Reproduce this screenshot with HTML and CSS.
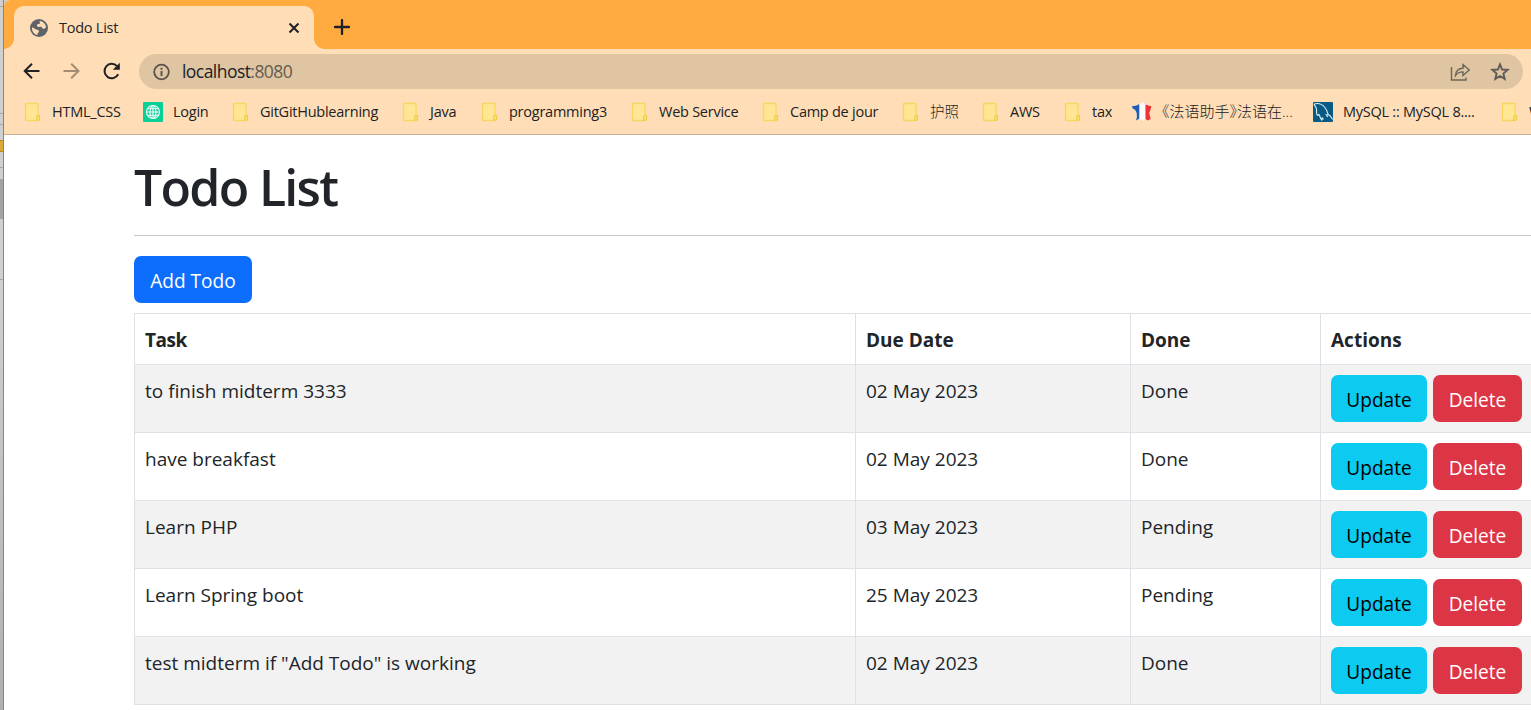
FILE: index.html
```html
<!DOCTYPE html>
<html lang="en">
<head>
<meta charset="utf-8">
<title>Todo List</title>
<link rel="stylesheet" href="styles.css">
</head>
<body>
<svg class="defs" width="0" height="0" aria-hidden="true">
  <symbol id="folder" viewBox="0 0 20 20">
    <path d="M3.500 1.500h12.500v11.500l1.500 1v3q0 1.500-1.500 1.500H3.500z" fill="#ffe694" stroke="#f7d75f" stroke-width="1.300" stroke-linejoin="round"/>
    <path d="M14.800 18.300v-3.500q0-1.500 1.300-1.500t1.300 1.500v2.300q0 1.200-1.300 1.200z" fill="#ffe47f" stroke="#f0c93e" stroke-width="1.100"/>
  </symbol>
</svg>
<div class="screen">
  <div class="behind"><i class="line l1"></i><i class="line l2"></i><i class="line l3"></i><i class="gold"></i><i class="line l4"></i><i class="thumb"></i><i class="line l5"></i></div>
  <div class="window">
    <div class="tabs">
      <div class="tab">
        <svg class="globe" viewBox="0 0 18 18"><circle cx="9" cy="9" r="9" fill="#5f6368"/><path d="M2 8.300l4.300 2.300c1 .6 2.600.3 2.700 1.600.1 1.200-1.300 1.100-1.500 2.400l-.2 1.500C4 15.500 1.600 12 2 8.300zM9.500 1.900c3.500.2 6.300 3 6.600 6.400-.9 1-1.700 1.700-2.900 1.500-1.300-.2-.8-1.700-2-2-1.300-.2-3.200.6-4-.5-.7-1 .1-2 1.200-2.200 1.100-.1 1.500-.3 1.500-1.400z" fill="#ffdeb7"/></svg>
        <span class="tab-title">Todo List</span>
        <svg class="close" viewBox="0 0 12 12"><path d="M1.500 1.500l9 9M10.500 1.500l-9 9" stroke="#202124" stroke-width="2" fill="none"/></svg>
      </div>
      <svg class="plus" viewBox="0 0 16 16"><path d="M8 1v14M1 8h14" stroke="#202124" stroke-width="2.300" stroke-linecap="round"/></svg>
    </div>
    <div class="toolbar">
      <svg class="nav" viewBox="0 0 20 20"><path d="M18.500 10H4M11 2.700L3.700 10l7.300 7.300" stroke="#202124" stroke-width="2" fill="none"/></svg>
      <svg class="nav" viewBox="0 0 20 20"><path d="M2.500 10h15M10.200 2.700L17.500 10l-7.300 7.300" stroke="#a28d74" stroke-width="2" fill="none"/></svg>
      <svg class="nav" viewBox="0 0 20 20"><path d="M17.200 13.200A7.200 7.200 0 1 1 16 5.100" stroke="#202124" stroke-width="2" fill="none"/><path d="M18.800 1.800v7h-7z" fill="#202124"/></svg>
      <div class="address">
        <svg class="info" viewBox="0 0 18 18"><circle cx="9.500" cy="9" r="7.300" fill="none" stroke="#5a534c" stroke-width="1.800"/><path d="M9.500 8v5M9.500 4.800v1.900" stroke="#5a534c" stroke-width="1.900"/></svg>
        <span class="url">localhost<span class="port">:8080</span></span>
        <svg class="share" viewBox="0 0 20 20"><path d="M1.500 5v13H16v-2.500M5.500 13.500C5.800 9 8.500 6.500 13 6.300V2.500L19.200 8 13 13.500V9.900C9.500 9.900 7.300 10.900 5.500 13.500z" fill="none" stroke="#6b645d" stroke-width="1.400"/></svg>
        <svg class="star" viewBox="0 0 20 20"><path d="M10 2.400l2.100 5.100 5.500.4-4.200 3.600 1.300 5.400-4.700-2.900-4.700 2.900 1.300-5.400L2.400 7.900l5.500-.4z" fill="none" stroke="#5f5b58" stroke-width="1.900"/></svg>
      </div>
    </div>
    <div class="bookmarks">
      <div class="bm b1"><svg viewBox="0 0 20 20"><use href="#folder"/></svg><span>HTML_CSS</span></div>
      <div class="bm b2"><svg viewBox="0 0 20 20"><rect width="20" height="20" rx="1" fill="#0acf97"/><g fill="none" stroke="#f4fffb" stroke-width="1.100"><circle cx="10" cy="10" r="6.500"/><ellipse cx="10" cy="10" rx="3" ry="6.500"/><path d="M10 3.500v13M3.500 10h13M4.500 6.800h11M4.500 13.200h11"/></g></svg><span>Login</span></div>
      <div class="bm b3"><svg viewBox="0 0 20 20"><use href="#folder"/></svg><span>GitGitHublearning</span></div>
      <div class="bm b4"><svg viewBox="0 0 20 20"><use href="#folder"/></svg><span>Java</span></div>
      <div class="bm b5"><svg viewBox="0 0 20 20"><use href="#folder"/></svg><span>programming3</span></div>
      <div class="bm b6"><svg viewBox="0 0 20 20"><use href="#folder"/></svg><span>Web Service</span></div>
      <div class="bm b7"><svg viewBox="0 0 20 20"><use href="#folder"/></svg><span>Camp de jour</span></div>
      <div class="bm b8"><svg viewBox="0 0 20 20"><use href="#folder"/></svg><span class="zh">护照</span></div>
      <div class="bm b9"><svg viewBox="0 0 20 20"><use href="#folder"/></svg><span>AWS</span></div>
      <div class="bm b10"><svg viewBox="0 0 20 20"><use href="#folder"/></svg><span>tax</span></div>
      <div class="bm b11"><svg viewBox="0 0 20 20"><path d="M0 4.200l4-.4L7.500 2v14.500L4 18.500q1.500-4 .7-7.500Q3.500 7 .5 6.500z" fill="#1d5fb8"/><path d="M7.500 2L9 1.600 10.500 0l1.500 1.600 1.500.4v14.500l-2 2-4-1.500z" fill="#fbfbfd"/><path d="M13.500 2.500l6 2-1.500 4.500-.8 2 1.500 6-3 1.500-2.200-1.500z" fill="#ee3338"/></svg><span class="zh long">《法语助手》法语在...</span></div>
      <div class="bm b12"><svg viewBox="0 0 20 20"><rect width="20" height="20" rx="1" fill="#075a84"/><path d="M1 2c4-1.200 8 .2 10.500 3 2.500 2.800 3 5 3.700 7.500l2 1.500 2.500 3.500M1 2c.7 2.200 2.200 2.800 2.500 5 .3 3-.5 4 .7 6 .9 1.300 1-1 1.800-.5.8 1.200 1 3.500 2.700 5.500l.6-2 1.200 1.500M15.200 12.500l-2 .2 1.500 2.300" fill="none" stroke="#dcecf3" stroke-width="1.100"/></svg><span>MySQL :: MySQL 8....</span></div>
      <div class="bm b13"><svg viewBox="0 0 20 20"><use href="#folder"/></svg><span>W</span></div>
    </div>
    <main class="page">
      <h1>Todo List</h1>
      <hr>
      <a class="btn add">Add Todo</a>
      <table>
        <colgroup><col class="c-task"><col class="c-date"><col class="c-done"><col class="c-act"></colgroup>
        <thead><tr><th class="first">Task</th><th>Due Date</th><th>Done</th><th>Actions</th></tr></thead>
        <tbody>
          <tr><td>to finish midterm 3333</td><td>02 May 2023</td><td>Done</td><td><div class="acts"><a class="btn update">Update</a><a class="btn delete">Delete</a></div></td></tr>
          <tr><td>have breakfast</td><td>02 May 2023</td><td>Done</td><td><div class="acts"><a class="btn update">Update</a><a class="btn delete">Delete</a></div></td></tr>
          <tr><td>Learn PHP</td><td>03 May 2023</td><td>Pending</td><td><div class="acts"><a class="btn update">Update</a><a class="btn delete">Delete</a></div></td></tr>
          <tr><td>Learn Spring boot</td><td>25 May 2023</td><td>Pending</td><td><div class="acts"><a class="btn update">Update</a><a class="btn delete">Delete</a></div></td></tr>
          <tr><td>test midterm if "Add Todo" is working</td><td>02 May 2023</td><td>Done</td><td><div class="acts"><a class="btn update">Update</a><a class="btn delete">Delete</a></div></td></tr>
        </tbody>
      </table>
    </main>
  </div>
</div>
</body>
</html>
```
FILE: styles.css
```css
* { box-sizing: border-box; }
body {
  margin: 0;
  overflow: hidden;
  font-family: "Segoe UI", "Open Sans", "Noto Sans", "Noto Sans CJK SC", sans-serif;
  color: #212529;
}
svg { display: block; flex: none; }
.defs { position: absolute; }
.screen { display: flex; width: 1531px; height: 710px; overflow: hidden; background: #ccc; }

.behind { position: relative; flex: none; width: 4px; background: linear-gradient(#cfcfcf, #d0d0d0 40%, #b0b0b0); border-right: 1px solid #858585; }
.behind i { position: absolute; left: 0; width: 3px; }
.line { height: 1px; background: #a5a5a5; }
.l1 { top: 6px; }
.l2 { top: 113px; }
.l3 { top: 124px; }
.l4 { top: 167px; }
.l5 { top: 279px; }
.gold { top: 140px; height: 12px; background: #d9a93a; border: solid #b98a1c; border-width: 1px 0; }
.thumb { top: 179px; height: 40px; background: #a3a3a3; }

.window { flex: none; width: 1527px; background: #fff; border-top-left-radius: 6px; overflow: hidden; }
.tabs { display: flex; align-items: flex-start; height: 49px; background: #ffab40; padding: 6px 0 0 10px; }
.tab {
  position: relative;
  display: flex;
  align-items: center;
  width: 300px;
  height: 43px;
  padding: 0 14px 0 16px;
  background: #ffdeb7;
  border-radius: 10px 10px 0 0;
}
.tab::before, .tab::after { content: ""; position: absolute; bottom: 0; width: 10px; height: 10px; }
.tab::before { left: -10px; background: radial-gradient(circle at 0 0, #ffab40 9.5px, #ffdeb7 10px); }
.tab::after { right: -10px; background: radial-gradient(circle at 100% 0, #ffab40 9.5px, #ffdeb7 10px); }
.globe { width: 18px; height: 18px; }
.tab-title { margin-left: 11px; font-size: 14.5px; letter-spacing: -0.25px; flex: 1; }
.close { width: 12px; height: 12px; }
.plus { width: 16px; height: 16px; margin: 13px 0 0 20px; }

.toolbar { display: flex; align-items: center; gap: 20px; height: 45px; padding: 0 8px 0 17px; background: #ffdeb7; }
.nav { width: 20px; height: 20px; margin-bottom: 1px; }
.address { display: flex; align-items: center; flex: 1; height: 35px; margin-left: -2px; border-radius: 18px; background: #dfc5a2; padding: 0 13px 0 13px; }
.info { width: 18px; height: 18px; }
.url { flex: 1; margin-left: 12px; padding-bottom: 2px; font-size: 17.5px; letter-spacing: -0.55px; color: #202124; }
.port { color: #655b50; }
.share { width: 20px; height: 20px; margin-right: 20px; }
.star { width: 20px; height: 20px; }

.bookmarks { display: flex; align-items: center; height: 41px; padding: 0 0 5px 18px; background: #ffdeb7; border-bottom: 1px solid #cbb192; overflow: hidden; }
.bm { display: flex; align-items: center; gap: 10px; flex: none; white-space: nowrap; font-size: 14.5px; letter-spacing: -0.25px; color: #202124; }
.bm svg { width: 20px; height: 20px; }
.zh { padding-bottom: 2px; font-weight: 300; letter-spacing: 0; }
.long { font-size: 15px; font-feature-settings: "halt"; }
.b1 { width: 121px; }
.b2 { width: 87px; }
.b3 { width: 170px; }
.b4 { width: 79px; }
.b5 { width: 150px; }
.b6 { width: 131px; }
.b7 { width: 140px; }
.b8 { width: 80px; }
.b9 { width: 82px; }
.b10 { width: 70px; }
.b11 { width: 181px; }
.b12 { width: 186px; }
.b13 { width: 60px; }

.page { width: 1420px; padding-left: 130px; box-sizing: content-box; }
h1 { margin: 0; padding-top: 22px; height: 100px; font-size: 50px; line-height: 60px; font-weight: 600; letter-spacing: -1.7px; }
hr { margin: 0 0 20px; border: 0; border-top: 1px solid #c7c8c9; }
.btn {
  display: flex;
  align-items: center;
  justify-content: center;
  height: 47px;
  padding-top: 2px;
  border-radius: 7px;
  font-size: 19.1px;
}
.add { width: 118px; background: #0d6efd; color: #fff; margin-bottom: 10px; }
table { width: 1420px; table-layout: fixed; border-collapse: collapse; font-size: 19px; line-height: 30px; }
.c-task { width: 721px; }
.c-date { width: 275px; }
.c-done { width: 190px; }
th, td { border: 1px solid #dee2e6; padding: 11px 10px 9px; text-align: left; vertical-align: top; }
thead tr { height: 51px; }
tbody tr { height: 68px; }
tbody tr:nth-child(odd) td { background: #f2f2f2; }
th { font-weight: 700; }
.first { letter-spacing: -0.5px; }
.acts { display: flex; gap: 6px; margin-top: -1px; }
.update { width: 96px; background: #0dcaf0; color: #000; }
.delete { width: 89px; background: #dc3545; color: #fff; }
```
